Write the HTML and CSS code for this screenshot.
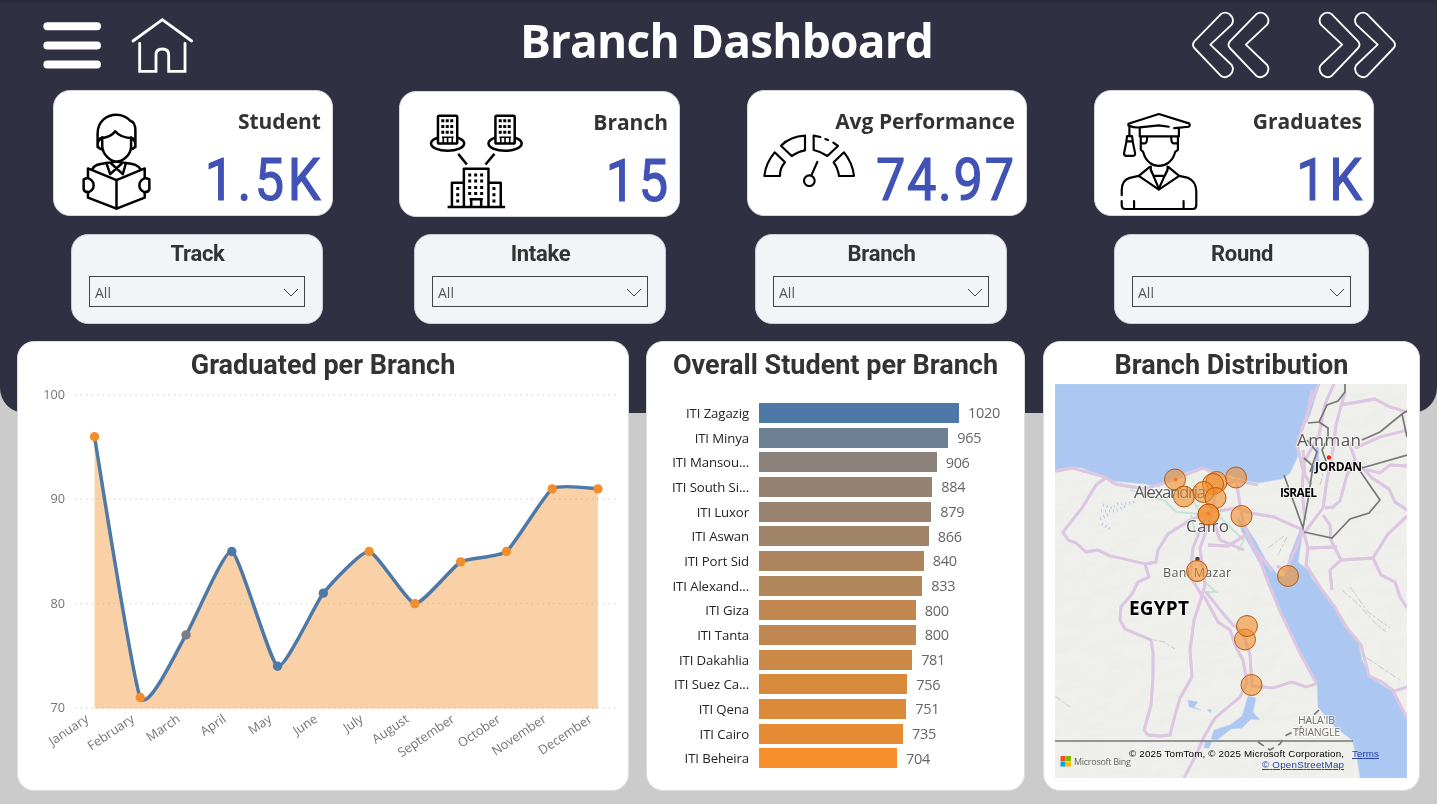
FILE: index.html
```html
<!DOCTYPE html>
<html lang="en">
<head>
<meta charset="utf-8">
<title>Branch Dashboard</title>
<link rel="stylesheet" href="styles.css">
</head>
<body>
<div class="backdrop"></div>
<main class="dashboard">
  <header class="header">
    <div class="nav">
      <svg class="menu" viewBox="129 65 174 140"><path d="M142 77.500H291M142 135H291M142 192H291"/></svg>
      <svg class="home" viewBox="390 50 195 171"><path d="M399 122L487 58L575 122M419 129V213H468V164Q468 146 487 146Q506 146 506 164V213H555V129"/></svg>
    </div>
    <h1 class="title">Branch Dashboard</h1>
    <div class="pager">
      <svg class="arrow" viewBox="318 30 240 210"><path id="chev" d="M407 43Q420 33 434 43Q450 57 440 74L376 134L440 195Q450 211 434 226Q420 237 407 227L328 144Q320 134 328 124Z"/><use href="#chev" x="106.500"/></svg>
      <svg class="arrow flipped" viewBox="318 30 240 210"><use href="#chev"/><use href="#chev" x="106.500"/></svg>
    </div>
  </header>

  <section class="cards">
    <article class="card">
      <svg class="icon icon-student" viewBox="240 330 220 305"><path d="M293 440V400C293 364 320 343 350 343C372 343 383 352 393 362C405 365 407 377 407 393V440M301 416C289 425 290 445 305 447M399 416C411 425 410 445 395 447M307 412V438C309 465 332 484 350 484C370 484 393 465 394 438V412M301 414C325 412 338 405 346 393C357 407 372 413 399 414M277 508C284 490 306 492 324 488Q350 482 376 488C395 491 414 491 423 508M320 490L331 522L366 490M378 490L369 522L334 490"/><path class="solid" d="M264 505L350 540L435 505V593L350 626L264 593Z"/><path d="M350 540V626"/><path class="solid" d="M251 538Q270 528 280 548Q285 568 267 576Q253 577 251 568ZM449 538Q430 528 420 548Q415 568 433 576Q447 577 449 568Z"/></svg>
      <div class="figures"><span class="label">Student</span><span class="value">1.5K</span></div>
    </article>
    <article class="card">
      <svg class="icon icon-branch" viewBox="115 95 292 295">
        <g id="tower"><ellipse cx="174" cy="190" rx="50" ry="22"/><rect class="solid" x="145" y="106" width="58" height="84" rx="4"/><path class="win" d="M155 121h37M155 139h37M155 156h37"/><path class="thin" d="M157 171H192M161 171V188M174 171V188M188 171V188"/></g>
        <use href="#tower" x="173"/>
        <path d="M206 221L232 253M315 221L288 253M187 380V308H223M223 380V266H297V380M297 308H334V380M174 381H347M240 358H280M245 358V380M275 358V380"/>
        <path class="win wide" d="M236 285H283M236 303H283M236 322H283M236 340H283"/>
        <path class="win" d="M200 325h10M200 344h10M200 363h10M309 325h10M309 344h10M309 363h10"/>
      </svg>
      <div class="figures"><span class="label">Branch</span><span class="value">15</span></div>
    </article>
    <article class="card">
      <svg class="icon icon-gauge" viewBox="65 160 285 168"><path d="M72 289Q76 250 103 218L134 248Q118 266 119 289ZM122 198Q150 170 194 168V212Q175 215 154 229ZM240 172L220 168V211Q240 215 261 229L293 199L279 189M255 178L263 181M341 289Q337 250 311 218L280 248Q293 266 296 289ZM213 287L231 247"/><circle cx="207" cy="303" r="16"/></svg>
      <div class="figures"><span class="label">Avg Performance</span><span class="value long">74.97</span></div>
    </article>
    <article class="card">
      <svg class="icon icon-grad" viewBox="100 333 245 302"><path d="M252 380L222 376L165 382Q150 384 131 376V371L222 342L312 370Q318 376 311 380L268 384M165 385V409H282V385M134 378V408M127 408H142L144 424H125ZM125 425L118 459Q118 467 125 467H145Q152 467 151 459L144 425M168 412V449L175 455M279 412V449L271 455M170 430H178Q187 430 187 412M277 430H268Q259 430 259 412M175 455C183 487 205 497 222 497C240 497 263 487 271 455M198 499V510L206 527H240L248 510V499M195 500L162 527L222 568L283 527L250 500M198 508L222 565L248 508M111 585V570Q111 540 135 533L162 527M283 527L310 533Q333 543 334 572V615Q334 626 324 626H122Q111 626 111 615V602M148 602V624M296 602V624"/></svg>
      <div class="figures"><span class="label">Graduates</span><span class="value">1K</span></div>
    </article>
  </section>

  <section class="slicers">
    <div class="slicer"><h2>Track</h2><div class="select"><span>All</span><svg viewBox="0 0 16 9"><path d="M1 1L8 8L15 1"/></svg></div></div>
    <div class="slicer"><h2>Intake</h2><div class="select"><span>All</span><svg viewBox="0 0 16 9"><path d="M1 1L8 8L15 1"/></svg></div></div>
    <div class="slicer"><h2>Branch</h2><div class="select"><span>All</span><svg viewBox="0 0 16 9"><path d="M1 1L8 8L15 1"/></svg></div></div>
    <div class="slicer"><h2>Round</h2><div class="select"><span>All</span><svg viewBox="0 0 16 9"><path d="M1 1L8 8L15 1"/></svg></div></div>
  </section>

  <section class="panels">
    <article class="panel">
      <h2>Graduated per Branch</h2>
      <svg class="line-chart" id="line" viewBox="18 384 610 396"></svg>
    </article>
    <article class="panel">
      <h2>Overall Student per Branch</h2>
      <div class="bars" id="bars"></div>
    </article>
    <article class="panel">
      <h2>Branch Distribution</h2>
      <svg class="map" viewBox="1055 384 352 394">
        <defs>
          <filter id="relief" x="0" y="0" width="100%" height="100%"><feTurbulence type="fractalNoise" baseFrequency=".035 .06" numOctaves="4" seed="8"/><feDiffuseLighting surfaceScale="1.800" lighting-color="#fff"><feDistantLight azimuth="225" elevation="62"/></feDiffuseLighting></filter>
        </defs>
        <rect class="land" x="1055" y="384" width="352" height="394"/>
        <rect class="relief" x="1055" y="384" width="352" height="394" filter="url(#relief)"/>
        <path class="delta" d="M1168 482L1185 473L1203 468L1235 478L1225 500L1210 520L1190 505Z"/>
        <path class="sea" d="M1055 384V470L1060 472L1072 467L1082 468L1092 472L1108 478L1113 481L1145 484L1158 487L1168 482L1185 473L1203 467L1212 470L1235 477L1248 481L1258 483L1282 479L1290 473L1297 458L1303 428L1310 415L1317 392L1319 384Z"/>
        <path class="sea" d="M1237 517L1242 532L1255 555L1267 577L1275 600L1295 643L1317 683L1318 707L1335 727L1352 740L1357 757L1360 778H1407V717L1393 692L1370 677L1362 660L1358 640L1345 627L1332 603L1323 590L1313 580L1308 570L1298 562L1303 531L1300 530L1290 555L1284 577L1278 575L1266 560L1255 540L1245 525Z"/>
        <path class="sea" d="M1316 445l3 3l-1 26l-4 -3ZM1248 696l8 2l-3 14l7 8l-9 -1l-9 9l-11 1l-14 11l-6 -1l3 -9l16 -5l12 -9ZM1205 742l7 -1l-3 7h-5ZM1188 700l10 2l-4 5l7 3l-12 -3ZM1207 710l4 -1v4Z"/>
        <g class="green"><path d="M1130 490L1165 501L1176 512L1200 514L1214 523M1200 512L1182 482M1210 517L1206 475M1218 515L1233 530L1244 540L1238 551M1191 515L1196 535M1206 583L1216 592L1198 592"/></g>
        <path class="marsh" d="M1103 505L1112 508L1118 504L1130 503L1137 501M1101 511L1115 511L1126 506M1100 519L1109 514M1102 524L1110 529"/>
        <g id="roads" class="road">
          <path d="M1055 471L1072 468L1105 477L1115 484L1145 489L1170 481L1203 468L1232 480L1258 485M1107 477L1096 485L1082 508L1063 532L1068 540L1076 543L1086 552L1098 550L1110 556L1125 559L1145 564L1149 577L1138 582L1132 594L1121 607L1120 620L1125 629L1151 640L1153 652L1153 677L1151 705L1144 730L1148 735L1160 736L1170 735L1175 715L1180 698L1192 677L1190 650L1194 620L1202 596L1190 576L1193 548L1205 518"/>
          <path d="M1145 564L1156 562L1158 550L1168 534L1190 520L1210 512L1238 508L1251 513L1274 517L1303 530M1202 596L1205 585L1200 548L1210 520L1216 490L1236 480L1242 516L1251 544L1272 571M1204 596L1218 622L1230 630L1236 647L1243 660L1247 683L1240 697L1215 718L1205 735L1195 757L1184 778M1206 592L1221 611L1232 624L1243 633L1250 655L1252 686L1273 688L1292 682L1306 687L1316 684M1208 545L1228 546L1246 535M1213 520L1220 540L1244 550"/>
          <path d="M1244 526L1260 560L1266 577L1280 611L1300 653L1317 684M1303 530L1296 548L1286 571L1277 566M1303 530L1308 548L1306 565L1322 590L1334 606L1347 628L1361 645L1369 676L1382 682L1394 691L1407 687M1393 691L1407 718M1305 532L1323 508L1327 480L1333 450L1336 425L1345 392M1325 508L1333 507L1340 501L1347 475L1355 459L1348 440M1323 515L1330 525L1331 540L1341 560L1373 558L1388 534L1407 516M1308 548L1337 547M1341 560L1330 570L1332 590M1373 558L1381 575L1395 582L1400 597L1407 608M1357 462L1372 478L1389 489L1395 502L1407 510M1355 448L1380 437L1407 430M1340 405L1358 402L1375 399L1390 407L1407 412M1359 468L1380 473L1390 465L1407 466M1303 470L1297 445L1310 405L1319 384M1334 384L1325 404L1319 435L1304 462L1302 490L1305 520M1303 450L1305 475L1311 485M1312 390L1306 422"/>
        </g>
        <use href="#roads" class="road-core"/>
        <path class="border" d="M1284 475L1303 528L1308 500L1313 466L1304 458M1304 532L1332 538L1350 519L1369 513L1380 500L1358 468M1362 468L1407 455M1362 440L1380 432L1402 414L1407 411M1402 414L1407 437M1345 384L1345 392L1338 401L1327 405L1319 422L1308 423M1319 422L1328 428V438L1322 450L1326 461M1307 440L1317 452L1310 472M1055 741H1353"/>
        <path class="border dashed" d="M1258 742L1270 750L1280 744L1285 736L1300 728L1319 710"/>
        <g class="ridges"><path d="M1342 590L1360 606L1374 622L1386 632M1350 587L1368 612L1390 628M1278 555L1287 537M1268 548L1284 536M1145 638L1164 642L1175 649M1320 485L1325 466M1055 696L1070 707M1355 650L1400 680"/></g>
        <g class="places">
          <text class="city" x="1134" y="498" textLength="72">Alexandria</text>
          <text class="city" x="1186" y="532" textLength="43">Cairo</text>
          <text class="city" x="1297" y="446" textLength="64">Amman</text>
          <text class="town" x="1163" y="577" textLength="68">Bani Mazar</text>
          <text class="country" x="1129" y="615" textLength="60">EGYPT</text>
          <text class="state" x="1280" y="497" textLength="37">ISRAEL</text>
          <text class="state" x="1315" y="471" textLength="47">JORDAN</text>
          <text class="region" x="1298" y="724" textLength="37">HALA'IB</text>
          <text class="region" x="1293" y="736" textLength="47">TRIANGLE</text>
        </g>
        <circle class="capital" cx="1329" cy="457.500" r="2.800"/><circle cx="1197.500" cy="559" r="2.300" fill="#444"/>
        <g class="pins"><circle cx="1175" cy="479.500" r="10.500"/><circle cx="1184" cy="496.500" r="10.500"/><circle cx="1216.500" cy="482" r="10.500"/><circle cx="1213" cy="484" r="10.500"/><circle cx="1203.500" cy="492" r="10.500"/><circle cx="1215.500" cy="498" r="10.500"/><circle cx="1208.500" cy="514.500" r="10.500"/><circle cx="1208.500" cy="514.500" r="10.500"/><circle cx="1236" cy="477.500" r="10.500"/><circle cx="1241.500" cy="516" r="10.500"/><circle cx="1197" cy="571" r="10.500"/><circle cx="1288" cy="576" r="10.500"/><circle cx="1245" cy="639.500" r="10.500"/><circle cx="1247" cy="626" r="10.500"/><circle cx="1251.500" cy="685" r="10.500"/></g>
        <g class="pin-dots"><circle cx="1175.500" cy="479.500" r="2"/><circle cx="1208.500" cy="513.500" r="2"/></g>
        <rect x="1060.500" y="756" width="5" height="5" fill="#f25022"/><rect x="1066" y="756" width="5" height="5" fill="#7fba00"/><rect x="1060.500" y="761.500" width="5" height="5" fill="#00a4ef"/><rect x="1066" y="761.500" width="5" height="5" fill="#ffb900"/>
        <text class="bing" x="1074" y="765" textLength="57">Microsoft Bing</text>
        <g class="credits"><text x="1129" y="757" textLength="215">© 2025 TomTom, © 2025 Microsoft Corporation,</text><text class="link" x="1352" y="757" textLength="27">Terms</text><text class="link" x="1262" y="768" textLength="82">© OpenStreetMap</text></g>
      </svg>
    </article>
  </section>
</main>
<script src="charts.js"></script>
</body>
</html>
```
FILE: styles.css
```css
* { box-sizing: border-box; }
body { margin: 0; width: 1437px; height: 804px; overflow: hidden; background: #cbcbcb; font-family: "Open Sans", "Noto Sans", sans-serif; color: #333; }
h1, h2 { margin: 0; }
svg { display: block; flex: none; }
.backdrop { position: absolute; inset: 0 0 auto; height: 413px; border-radius: 0 0 25px 25px; background: linear-gradient(#282a3b, #2f3142 5px); }
.dashboard { position: relative; display: flex; flex-direction: column; height: 804px; }

.header { display: grid; grid-template-columns: 1fr auto 1fr; height: 90px; padding: 0 40px 0 56px; }
.nav { display: flex; gap: 29px; margin-left: -13px; }
.menu { width: 58px; height: 47px; margin-top: 21.500px; fill: none; stroke: #fff; stroke-width: 24; stroke-linecap: round; }
.home { width: 65px; height: 57px; margin-top: 17px; fill: none; stroke: #fff; stroke-width: 8.500; stroke-linecap: round; }
.title { padding-top: 8px; font-size: 46px; line-height: 64px; font-weight: 700; color: #fff; letter-spacing: -.8px; white-space: nowrap; }
.pager { display: flex; justify-content: flex-end; gap: 46px; padding-top: 10px; }
.arrow { width: 80px; height: 70px; fill: none; stroke: #fff; stroke-width: 5.500; stroke-linejoin: round; }
.flipped { transform: scaleX(-1); }

.cards { display: grid; grid-template-columns: repeat(4, 280px); column-gap: 67px; padding-left: 53px; height: 144px; }
.card { display: flex; justify-content: space-between; height: 126px; background: #fff; border: 1px solid #d5d5da; border-radius: 17px; }
.card:nth-child(2) { margin: 1px 0 0 -1px; width: 281px; }
.icon { fill: none; stroke: #000; stroke-width: 7.500; stroke-linejoin: round; stroke-linecap: round; }
.solid { fill: #fff; }
.icon-student { width: 73px; height: 102px; margin: 19px 0 0 26px; }
.icon-branch { width: 97px; height: 98px; margin: 20px 0 0 28px; stroke-linecap: butt; }
.icon-gauge { width: 95px; height: 56px; margin: 42px -30px 0 14px; stroke-width: 6.500; }
.icon-grad { width: 82px; height: 101px; margin: 20px 0 0 23px; stroke-width: 6.500; }
.win { stroke-width: 9; stroke-dasharray: 9 4.500; }
.wide { stroke-dasharray: 9 9; }
.thin { stroke-width: 5; }
.figures { display: flex; flex-direction: column; align-items: flex-end; padding: 15px 11px 0 0; }
.label { font-size: 21px; line-height: 30px; font-weight: 700; white-space: nowrap; }
.value { margin: 8px -3px 0 0; font: 400 60px/72px Roboto, sans-serif; letter-spacing: 4px; color: #4052b5; -webkit-text-stroke: 1.200px #4052b5; transform: scaleX(.87); transform-origin: right; }
.long { letter-spacing: 2px; margin-right: -1px; }

.slicers { display: grid; grid-template-columns: 343px 341px 359px 255px; padding-left: 71px; height: 107px; }
.slicer { width: 252px; height: 90px; padding: 5px 17px 0; background: #f3f4f8; border: 1px solid #cbccd2; border-radius: 17px; }
.slicer:last-child { width: 255px; }
.slicer h2 { text-align: center; font: 700 22px/28px Roboto, sans-serif; letter-spacing: -.3px; text-indent: 1px; }
.select { display: flex; align-items: center; justify-content: space-between; height: 31px; margin-top: 8px; padding: 2px 5px 0; border: 1px solid #444; font-size: 14px; color: #555; }
.select svg { width: 16px; height: 9px; fill: none; stroke: #444; }

.panels { display: grid; grid-template-columns: 612px 378px 377px; column-gap: 18px; padding-left: 17px; margin-right: 17px; }
.panel { height: 450px; padding: 6px 0 0; background: #fff; border: 1px solid #ddd; border-radius: 17px; }
.panel:nth-child(2) { margin-left: -1px; }
.panel h2 { text-align: center; font: 700 27px/34px Roboto, sans-serif; white-space: nowrap; }
.line-chart { width: 610px; height: 396px; margin-top: 2px; }
.grid { stroke: #ddd; stroke-width: 1.500; stroke-dasharray: 1.500 4; }
.area { fill: #f28e2b; fill-opacity: .42; }
.curve { fill: none; stroke: #4e79a7; stroke-width: 3.500; }
.axis { fill: #757575; font-size: 12.700px; text-anchor: end; }

.bars { padding: 18.500px 0 0 12px; }
.bar-row { display: flex; align-items: center; height: 24.680px; }
.bar-name { width: 90px; text-align: right; font-size: 13.200px; letter-spacing: -.1px; color: #252423; white-space: nowrap; }
.bar { height: 20px; margin: 0 9px 0 10px; }
.bar-value { font-size: 14.500px; letter-spacing: -.3px; color: #666; }

.map { width: 352px; height: 394px; margin: 2px auto 0 11px; overflow: hidden; }
.land { fill: #f0f0ed; }
.relief { opacity: .13; mix-blend-mode: multiply; }
.delta { fill: #eaf0e6; }
.sea { fill: #abc7f2; stroke: #c3d5ef; stroke-width: .6; }
.marsh { fill: none; stroke: #abc7f2; stroke-width: 3; stroke-dasharray: 1 3; }
.green { fill: none; stroke: #c4e2d5; stroke-width: 1.800; }
.road { fill: none; stroke: #dcc6e1; stroke-width: 2.800; stroke-linejoin: round; }
.road-core { stroke: #f1e8f0; stroke-width: 1.300; }
#roads path { stroke: inherit; stroke-width: inherit; }
.border { fill: none; stroke: #777; stroke-width: 1.700; }
.dashed { stroke-dasharray: 7 5; }
.ridges { fill: none; stroke: #c8c9c5; stroke-width: 1; stroke-dasharray: 7 2 3 2; }
.places text { paint-order: stroke; stroke: #fff; stroke-opacity: .6; stroke-width: 2px; }
.city { font-size: 17px; fill: #555; }
.town { font-size: 12.500px; fill: #555; }
.country { font-size: 19px; font-weight: 700; fill: #000; }
.state { font-size: 12px; font-weight: 700; fill: #000; }
.region { font-size: 10.500px; fill: #776c69; }
.capital { fill: #e52b20; stroke: #fff; stroke-width: 1; }
.pins { fill: #f28e2b; fill-opacity: .6; stroke: #b85a10; stroke-width: 1; }
.pin-dots { fill: #ff7420; }
.bing { font-size: 9px; fill: #666; }
.credits { font-family: "Liberation Sans", sans-serif; font-size: 9.800px; fill: #000; }
.link { fill: #2342a5; text-decoration: underline; }
```
FILE: charts.js
```js
const students = [
  ['ITI Zagazig', 1020, '#4e79a7'], ['ITI Minya', 965, '#6d7f93'], ['ITI Mansou...', 906, '#8b827b'],
  ['ITI South Si...', 884, '#968271'], ['ITI Luxor', 879, '#988370'], ['ITI Aswan', 866, '#9f846a'],
  ['ITI Port Sid', 840, '#ad855e'], ['ITI Alexand...', 833, '#b0865b'], ['ITI Giza', 800, '#c08850'],
  ['ITI Tanta', 800, '#c08850'], ['ITI Dakahlia', 781, '#cb8947'], ['ITI Suez Ca...', 756, '#d88a3c'],
  ['ITI Qena', 751, '#db8a3a'], ['ITI Cairo', 735, '#e48b33'], ['ITI Beheira', 704, '#f7902b']
];
document.getElementById('bars').innerHTML = students.map(([name, n, color]) =>
  `<div class="bar-row"><span class="bar-name">${name}</span><span class="bar" style="width:${n * 200 / 1020}px;background:${color}"></span><span class="bar-value">${n}</span></div>`).join('');

const blue = '#4e79a7', orange = '#f28e2b', grey = '#7a7f88';
const months = [
  ['January', 96, orange], ['February', 71, orange], ['March', 77, grey], ['April', 85, blue],
  ['May', 74, blue], ['June', 81, blue], ['July', 85, orange], ['August', 80, orange],
  ['September', 84, orange], ['October', 85, orange], ['November', 91, orange], ['December', 91, orange]
];
const scaleY = v => 395 + (100 - v) * 10.43;
const pts = months.map((m, i) => [94.5 + i * 45.77, scaleY(m[1])]);

// Cardinal spline with tension 0.5, expressed as cubic Bezier segments.
function spline(p) {
  const k = 0.5 / 6;
  let d = `M${p[0]}`;
  for (let i = 0; i < p.length - 1; i++) {
    const p0 = p[i - 1] || p[i], p1 = p[i], p2 = p[i + 1], p3 = p[i + 2] || p[i + 1];
    d += `C${p1[0] + (p2[0] - p0[0]) * k},${p1[1] + (p2[1] - p0[1]) * k} ${p2[0] - (p3[0] - p1[0]) * k},${p2[1] - (p3[1] - p1[1]) * k} ${p2}`;
  }
  return d;
}
const curve = spline(pts);
let svg = [100, 90, 80, 70].map(v => `<path class="grid" d="M75 ${scaleY(v)}H617"/><text class="axis" x="65" y="${scaleY(v) + 4}">${v}</text>`).join('');
svg += `<path class="area" d="${curve}V708.500H${pts[0][0]}Z"/><path class="curve" d="${curve}"/>`;
pts.forEach(([x, y], i) => {
  svg += `<circle cx="${x}" cy="${y}" r="4.700" fill="${months[i][2]}"/><text class="axis" transform="translate(${x - 5} 721) rotate(-34)">${months[i][0]}</text>`;
});
document.getElementById('line').innerHTML = svg;
```
